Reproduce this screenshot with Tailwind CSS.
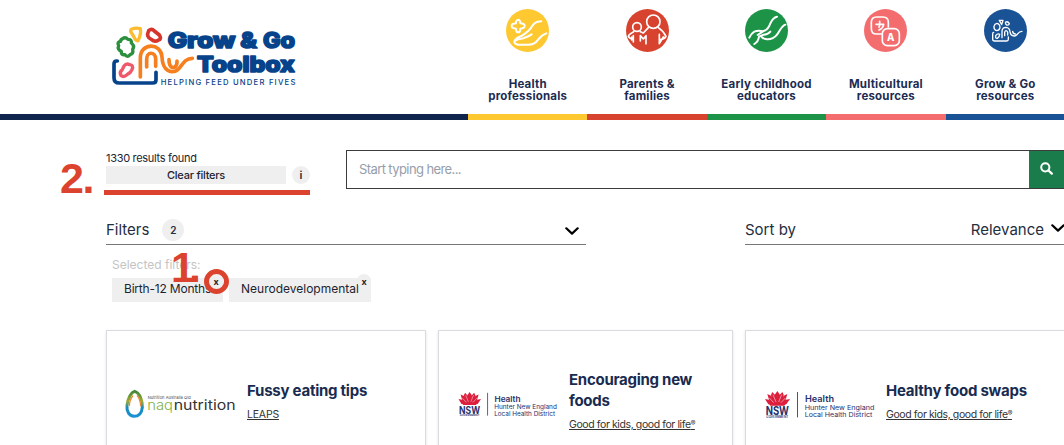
<!DOCTYPE html>
<html lang="en">
<head>
<meta charset="utf-8">
<title>Grow &amp; Go Toolbox</title>
<script src="https://cdn.jsdelivr.net/npm/@tailwindcss/browser@4"></script>
</head>
<body class="relative h-[445px] w-[1064px] overflow-hidden bg-white font-['Inter',sans-serif] text-[#1d2430]">
<svg class="hidden">
  <symbol id="nsw" viewBox="0 0 330 90">
    <g fill="#dc1f3c">
      <path d="M37 3 L45 15 L42 42 H32 L29 15 Z"/>
      <path d="M22 6 L31 16 L34 42 L20 30 L18 14 Z"/><path d="M52 6 L43 16 L40 42 L54 30 L56 14 Z"/>
      <path d="M7 12 L18 17 L32 44 L14 36 Z"/><path d="M67 12 L56 17 L42 44 L60 36 Z"/>
      <path d="M0 27 L12 29 L34 45 L10 43 Z"/><path d="M75 27 L62 29 L40 45 L64 43 Z"/>
      <path d="M8 36 H66 L58 47 H16 Z"/>
    </g>
    <path d="M24 14 L33 36 M50 14 L41 36 M13 24 L26 38 M61 24 L48 38" stroke="#fff" stroke-width="1.5" fill="none"/>
    <g fill="#25306e" font-family="Inter, sans-serif">
      <text x="2" y="75" font-size="34" font-weight="700" textLength="70" lengthAdjust="spacingAndGlyphs">NSW</text>
      <text x="4" y="84" font-size="9" font-weight="600" textLength="66" lengthAdjust="spacingAndGlyphs">GOVERNMENT</text>
      <rect x="96" y="6" width="2.5" height="76"/>
      <text x="120" y="35" font-size="26" font-weight="600" textLength="87" lengthAdjust="spacingAndGlyphs">Health</text>
      <text x="119" y="60" font-size="20" textLength="209" lengthAdjust="spacingAndGlyphs">Hunter New England</text>
      <text x="119" y="82" font-size="20" textLength="203" lengthAdjust="spacingAndGlyphs">Local Health District</text>
    </g>
  </symbol>
</svg>

<header class="flex h-[120px] w-[1065px]">
  <div class="w-[468px] shrink-0 border-b-6 border-[#10254c] pt-[15px] pl-[100px]">
    <svg class="h-20 w-[210px]" viewBox="0 0 630 240" fill="none" stroke-linecap="round" stroke-linejoin="round">
      <path d="M52 138 H50 Q42 138 42 147 V188 Q42 204 58 204 H158 Q168 204 168 194 V172" stroke="#07438a" stroke-width="11"/>
      <path d="M68 71 Q76 65 84 73 Q96 73 94 84 Q105 92 98 103 Q101 116 90 119 Q82 129 75 119 Q63 121 64 109 Q51 104 56 92 Q50 80 62 79 Q62 73 68 71Z" stroke="#2b8f3d" stroke-width="10"/>
      <path d="M94 43 Q108 37 121 41 Q124 58 114 77 Q108 79 103 68 L92 49 Q91 45 94 43Z" stroke="#fdbb2f" stroke-width="10"/>
      <path d="M146 47 Q155 39 163 48 L178 60 Q186 73 174 76 Q164 82 154 73 Q137 66 146 47Z" stroke="#d7342c" stroke-width="11"/>
      <path d="M72 153 Q79 144 89 149 Q102 150 96 164 Q92 174 82 178 Q72 188 63 182 Q57 172 67 164Z" stroke="#f0596a" stroke-width="10"/>
      <path d="M121 186 V129 C121 82 184 82 186 126 C187 158 203 174 224 169 C244 165 247 130 277 130 M140 156 V133 C140 109 165 109 167 131 V154 M207 134 C207 154 215 159 223 157 C232 154 231 145 231 138" stroke="#f6801f" stroke-width="11"/>
      <g fill="#07438a" stroke="#07438a" font-family="Inter, sans-serif">
        <g font-weight="800" stroke-width="5">
          <text x="203" y="100" font-size="64" textLength="203" lengthAdjust="spacingAndGlyphs">Grow</text>
          <text x="421" y="100" font-size="64" textLength="50" lengthAdjust="spacingAndGlyphs">&amp;</text>
          <text x="489" y="100" font-size="64" textLength="96" lengthAdjust="spacingAndGlyphs">Go</text>
          <text x="291" y="171" font-size="64" textLength="293" lengthAdjust="spacingAndGlyphs">Toolbox</text>
        </g>
        <text x="182" y="209" font-size="23" font-weight="500" stroke="none" textLength="404">HELPING FEED UNDER FIVES</text>
      </g>
    </svg>
  </div>
  <nav class="grid flex-1 grid-cols-5 text-center text-[11.5px] leading-[12px] font-bold tracking-[0.2px] text-[#1b2c52]">
    <a class="flex flex-col items-center border-b-6 border-[#fec831] pt-[9px]">
      <svg class="mb-[26px] size-[43px] shrink-0" viewBox="0 0 129 129" fill="none" stroke="#fff" stroke-width="6" stroke-linecap="round" stroke-linejoin="round"><circle cx="64.500" cy="64.500" r="64.500" fill="#fec831" stroke="none"/>
        <path d="M30 38 Q32 32 37 32 Q43 33 43 43 Q56 43 56 51 Q56 58 43 59 Q43 70 37 70 Q30 70 30 59 Q17 58 17 51 Q17 44 30 43Z"/>
        <path d="M106 37 C84 39 84 44 76 55 Q68 67 48 80 M77 76 Q68 82 54 87 C40 91 28 92 25 98 Q24 104 36 107 H68 Q86 107 97 91 Q108 77 121 73 M48 80 C36 86 26 88 25 98"/></svg>
      <span>Health<br>professionals</span></a>
    <a class="flex flex-col items-center border-b-6 border-[#d8432f] pt-[9px]">
      <svg class="mb-[26px] size-[43px] shrink-0" viewBox="0 0 129 129" fill="none" stroke="#fff" stroke-width="5" stroke-linecap="round" stroke-linejoin="round"><circle cx="64.500" cy="64.500" r="64.500" fill="#d8432f" stroke="none"/>
        <circle cx="82" cy="38" r="20"/><circle cx="33" cy="54" r="13"/>
        <path d="M17 84 V93 M22 99 V80 M22 92 Q9 88 7 82 Q8 76 23 68 M43 68 L52 72 L67 56 M43 96 V80 L52 90 L60 80 V104 M97 56 Q113 67 120 82 Q116 90 103 92 M100 76 V104 L112 84"/></svg>
      <span>Parents &amp;<br>families</span></a>
    <a class="flex flex-col items-center border-b-6 border-[#1d9348] pt-[9px]">
      <svg class="mb-[26px] size-[43px] shrink-0" viewBox="0 0 129 129" fill="none" stroke="#fff" stroke-width="6" stroke-linecap="round" stroke-linejoin="round"><circle cx="64.500" cy="64.500" r="64.500" fill="#1d9348" stroke="none"/>
        <path d="M96 23 C80 26 78 40 72 52 Q66 64 54 67 Q40 63 28 68 Q18 74 13 86 M121 47 C108 52 105 66 96 77 Q84 92 66 91 Q56 90 50 84 M76 68 Q68 77 56 77 L42 83 Q40 98 28 105 M54 67 L38 78"/></svg>
      <span class="whitespace-nowrap">Early childhood<br>educators</span></a>
    <a class="flex flex-col items-center border-b-6 border-[#f36d6f] pt-[9px]">
      <svg class="mb-[26px] size-[43px] shrink-0" viewBox="0 0 129 129" fill="none" stroke="#fff" stroke-width="5" stroke-linecap="round" stroke-linejoin="round"><circle cx="64.500" cy="64.500" r="64.500" fill="#f36d6f" stroke="none"/>
        <path d="M54 75 H38 Q22 75 22 59 V40 Q22 24 38 24 H57 Q73 24 73 40 V54"/><rect x="55" y="59" width="51" height="51" rx="15"/>
        <path d="M47 37 V43 M36 46 H59 Q57 58 45 63 M48 46 L45 55"/>
        <text x="80" y="96" text-anchor="middle" font-size="29" font-weight="800" fill="#fff" stroke="none">A</text></svg>
      <span>Multicultural<br>resources</span></a>
    <a class="flex flex-col items-center border-b-6 border-[#1a5395] pt-[9px]">
      <svg class="mb-[26px] size-[43px] shrink-0" viewBox="0 0 129 129" fill="none" stroke="#fff" stroke-width="4" stroke-linecap="round" stroke-linejoin="round"><circle cx="64.500" cy="64.500" r="64.500" fill="#1a5395" stroke="none"/>
        <path d="M29 70 Q26 70 26 75 V90 Q26 96 32 96 H68 Q73 96 73 91 V84 M39 43 Q48 45 48 56 Q46 65 38 65 Q29 63 30 52 Q32 44 39 43Z M46 34 H57 L53 47Z M65 39 Q72 36 76 44 Q75 49 68 48 Q63 45 65 39Z M35 80 Q41 72 47 76 Q47 84 40 88 Q34 90 35 80Z M54 86 V66 Q55 55 66 55 Q77 56 78 68 Q80 82 92 81 C102 80 100 67 114 67 M62 80 V69 Q66 61 71 69 V78 M86 67 Q87 75 94 75"/></svg>
      <span>Grow &amp; Go<br>resources</span></a>
  </nav>
</header>

<main class="h-[325px] w-[1064px] overflow-hidden pl-[106px]">
  <section class="flex w-[984px] pt-[30px]">
    <div class="w-[240px] pt-[1px]">
      <p class="h-[14px] text-[11px] leading-[14px] tracking-[-0.3px]">1330 results found</p>
      <div class="mt-px flex items-center gap-[6px]">
        <button class="h-[18px] w-[180px] bg-[#efefef] text-[11px] leading-[17px] font-medium tracking-[-0.22px]">Clear filters</button>
        <span class="grid size-[18px] place-items-center rounded-full bg-[#efefef] text-[11px] leading-none font-semibold">i</span>
      </div>
      <div class="-ml-[2px] mt-[6px] h-[5px] w-[206px] bg-[#dc432f]"></div>
    </div>
    <div class="flex h-[39px] w-[730px] border border-[#3c3c3c]">
      <div class="w-[682px] pl-[12px] text-[13px] leading-[37px] tracking-[-0.6px] text-[#969eab]">Start typing here...</div>
      <div class="flex-1 bg-[#1a7c4a] pt-[11px] pl-[11px]">
        <svg class="size-[13px]" viewBox="0 0 13 13" fill="none" stroke="#fff" stroke-linecap="round"><circle cx="5.300" cy="5.300" r="4.100" stroke-width="2"/><path d="M8.500 8.500 L11.800 11.600" stroke-width="2.300"/></svg>
      </div>
    </div>
  </section>

  <section class="flex w-[984px] pt-[20px] text-[15px] text-[#242e3e]">
    <div class="flex h-[30px] w-[480px] items-center border-b-[1.5px] border-[#777]">
      <span class="pt-[2px]">Filters</span>
      <span class="ml-[13px] grid size-[22px] place-items-center rounded-full bg-[#efefef] pt-px text-[10px] font-semibold">2</span>
      <svg class="mr-[7px] ml-auto mt-[2px] h-[8px] w-[14px]" viewBox="0 0 14 8" fill="none" stroke="#000" stroke-width="2.200" stroke-linecap="round" stroke-linejoin="round"><path d="M1.300 1.300 L7 6.600 L12.700 1.300"/></svg>
    </div>
    <div class="ml-[159px] flex h-[30px] w-[320px] items-center border-b-[1.5px] border-[#777]">
      <span class="pt-[2px]">Sort by</span>
      <span class="ml-auto pt-[2px]">Relevance</span>
      <svg class="ml-[7px] h-[8px] w-[14px] -mt-[3px]" viewBox="0 0 14 8" fill="none" stroke="#000" stroke-width="2.200" stroke-linecap="round" stroke-linejoin="round"><path d="M1.300 1.300 L7 6.600 L12.700 1.300"/></svg>
    </div>
  </section>

  <section class="h-[85px] pt-[11px] pl-[6px]">
    <p class="text-[12px] leading-[18px] text-[#c4c4c4]">Selected filters:</p>
    <div class="mt-[4px] flex gap-[6px] text-[12px] leading-[22px]">
      <div class="relative h-6 w-[111px] bg-[#efefef] pl-[12px] tracking-[-0.2px] whitespace-nowrap">Birth-12 Months<span class="absolute top-[-4px] right-0 grid size-[14px] place-items-center rounded-full bg-[#efefef] text-[9px] leading-none font-bold">x</span></div>
      <div class="relative h-6 w-[142px] bg-[#efefef] pl-[12px] whitespace-nowrap">Neurodevelopmental<span class="absolute top-[-4px] right-0 grid size-[14px] place-items-center rounded-full bg-[#efefef] text-[9px] leading-none font-bold">x</span></div>
    </div>
  </section>

  <section class="flex w-[984px] gap-3 text-[#182b50]">
    <article class="flex h-[140px] w-[320px] shrink-0 border border-[#d9dbe0] shadow-sm">
      <svg class="mt-[58px] ml-[17px] h-[30px] w-[114px] shrink-0" viewBox="0 0 342 90" fill="none">
        <defs><linearGradient id="ring" x1="0" y1="0" x2="0" y2="1"><stop offset="0" stop-color="#438839"/><stop offset=".4" stop-color="#9aad35"/><stop offset=".65" stop-color="#168bba"/><stop offset="1" stop-color="#1a91d2"/></linearGradient></defs>
        <path d="M32 7 C48 12 56 36 55 55 C53 75 42 82 30 82 C16 81 7 68 9 49 C11 29 21 10 32 7Z" stroke="url(#ring)" stroke-width="9"/>
        <path d="M39 19 Q50 32 50 52 M16 51 Q16 34 27 20" stroke="#ef8734" stroke-width="4"/>
        <g font-family="Inter, sans-serif"><text x="71" y="31" font-size="12" fill="#444" textLength="129">Nutrition Australia Qld</text>
        <text x="70" y="63" font-size="41" font-weight="300" fill="#7fb043" textLength="77" lengthAdjust="spacingAndGlyphs">naq</text>
        <text x="149" y="63" font-size="41" fill="#333" textLength="186" lengthAdjust="spacingAndGlyphs">nutrition</text></g>
      </svg>
      <div class="ml-[9px] pt-[49px]">
        <h2 class="text-[15px] leading-[22px] font-bold tracking-[-0.24px]">Fussy eating tips</h2>
        <a class="mt-[5px] block text-[10.5px] leading-[16px] tracking-[-0.2px] text-[#333] underline underline-offset-1">LEAPS</a>
      </div>
    </article>
    <article class="flex h-[140px] w-[295px] shrink-0 border border-[#d9dbe0] shadow-sm">
      <svg class="mt-[60px] ml-[19px] h-[27px] w-[100px] shrink-0"><use href="#nsw"/></svg>
      <div class="ml-[11px] pt-[38px]">
        <h2 class="w-[140px] text-[15px] leading-[21px] font-bold tracking-[-0.27px]">Encouraging new foods</h2>
        <a class="mt-[6px] block text-[10.5px] leading-[16px] tracking-[-0.4px] whitespace-nowrap text-[#333] underline underline-offset-1">Good for kids, good for life<span class="align-[2px] text-[7px] leading-none">®</span></a>
      </div>
    </article>
    <article class="flex h-[140px] w-[340px] shrink-0 border border-[#d9dbe0] shadow-sm">
      <svg class="mt-[59px] ml-[19px] h-[30px] w-[110px] shrink-0"><use href="#nsw"/></svg>
      <div class="ml-[11px] pt-[49px]">
        <h2 class="text-[15px] leading-[22px] font-bold tracking-[-0.24px] whitespace-nowrap">Healthy food swaps</h2>
        <a class="mt-[5px] block text-[10.5px] leading-[16px] tracking-[-0.4px] whitespace-nowrap text-[#333] underline underline-offset-1">Good for kids, good for life<span class="align-[2px] text-[7px] leading-none">®</span></a>
      </div>
    </article>
  </section>
</main>

<div class="absolute top-[156px] left-[60px] font-['Liberation_Sans',sans-serif] text-[43px] leading-[44px] font-bold tracking-[-1.5px] text-[#dc432f]">2.</div>
<div class="absolute top-[245px] left-[171px] font-['Liberation_Sans',sans-serif] text-[43px] leading-[44px] font-bold tracking-[-6px] text-[#dc432f]">1.</div>
<div class="absolute top-[269px] left-[204px] size-[25px] rounded-full border-[5px] border-[#dc432f]"></div>
</body>
</html>
